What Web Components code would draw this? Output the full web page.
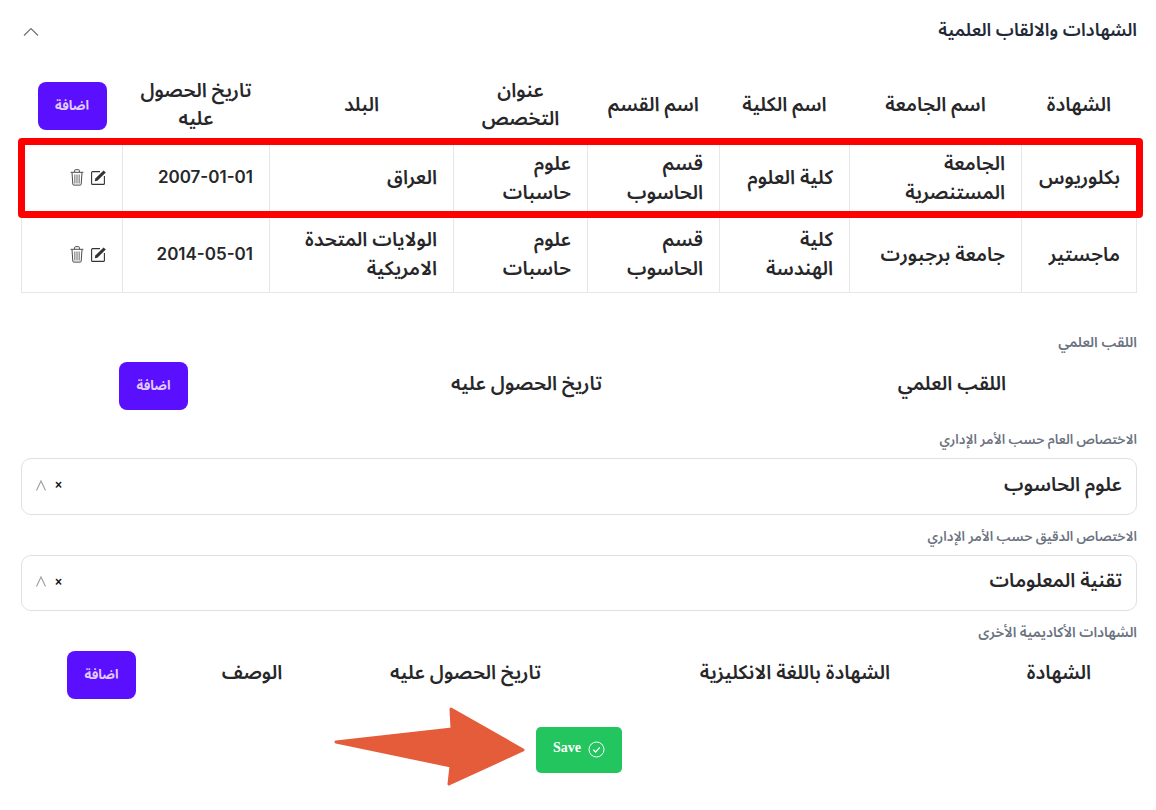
<!DOCTYPE html>
<html lang="ar" dir="rtl"><head><meta charset="utf-8"><title>Certificates</title>
<style>
html,body{margin:0;background:#fff}
body{font-family:Inter,"Noto Sans Arabic","Noto Sans",sans-serif;color:#27272a;width:1156px;height:810px;overflow:hidden;position:relative}
app-page{display:block}
</style></head><body>
<app-page></app-page>
<script>
const FONT='Inter,"Noto Sans Arabic","Noto Sans",sans-serif';
class AddBtn extends HTMLElement{constructor(){super();this.attachShadow({mode:'open'}).innerHTML=`<style>
:host{display:inline-flex;width:69px;height:48px;border-radius:8px;background:#5a0fff;color:#e0ccff;align-items:center;justify-content:center;font:700 13px ${FONT}}
</style><slot></slot>`}}
customElements.define('add-btn',AddBtn);
class FieldLabel extends HTMLElement{constructor(){super();this.attachShadow({mode:'open'}).innerHTML=`<style>
:host{display:block;font:600 13.300px/20px ${FONT};color:#6b7280;text-align:right}
</style><slot></slot>`}}
customElements.define('field-label',FieldLabel);
class SelectBox extends HTMLElement{constructor(){super();this.attachShadow({mode:'open'}).innerHTML=`<style>
:host{display:flex;box-sizing:border-box;height:var(--h,57px);border:1px solid #e0e0e4;border-radius:10px;align-items:center;justify-content:space-between;padding:0 14px 0 13px;font:600 19.500px ${FONT};color:#27272a}
.v{padding-bottom:4px}
.ctl{display:flex;align-items:center;gap:8px;direction:ltr;padding-bottom:2px}
.x{font:700 12px "Liberation Sans",sans-serif;color:#111}
</style><span class="v"><slot></slot></span><span class="ctl"><svg width="12" height="11" viewBox="0 0 12 11" fill="none" stroke="#a3a3a3" stroke-width="1.2"><path d="M1.500 10.500 6 1l4.500 9.500"/></svg><span class="x">×</span></span>`}}
customElements.define('select-box',SelectBox);
class HeadGrid extends HTMLElement{constructor(){super();this.attachShadow({mode:'open'}).innerHTML=`<style>
:host{display:grid;grid-template-columns:var(--cols);height:48px;align-items:center;justify-items:center;font:600 19.500px ${FONT};color:#27272a;text-align:center}
::slotted(span){padding-bottom:4px}
</style><slot></slot>`}}
customElements.define('head-grid',HeadGrid);
class SaveBtn extends HTMLElement{constructor(){super();this.attachShadow({mode:'open'}).innerHTML=`<style>
:host{display:flex;width:86px;height:46px;border-radius:5px;background:#22c55e;color:#fff;align-items:center;justify-content:center;gap:7px;direction:ltr;font:700 14px "Liberation Serif",serif}
span{margin-top:-3px}
</style><span>Save</span><svg width="17" height="17" viewBox="0 0 17 17" fill="none" stroke="#fff" stroke-width="1"><circle cx="8.5" cy="8.5" r="7.5"/><path d="M5.3 8.7 7.6 11l4.2-4.6" stroke-width="1.3"/></svg>`}}
customElements.define('save-btn',SaveBtn);
class RowActions extends HTMLElement{constructor(){super();this.attachShadow({mode:'open'}).innerHTML=`<style>
:host{display:flex;gap:7px;align-items:center;direction:rtl}
svg{display:block}
</style><svg width="15" height="15" viewBox="0 0 15 15" fill="none" stroke="#333" stroke-width="1.100"><path d="M9 1.600H1.600a1 1 0 0 0-1 1V13.400a1 1 0 0 0 1 1H12.400a1 1 0 0 0 1-1V6"/><path d="M3.800 11.200l.5-2.600L12.600.4l2.200 2.200L6.400 10.700z" fill="#333" stroke="none"/></svg><svg width="14" height="17" viewBox="0 0 14 17" fill="none" stroke="#4b4b4b" stroke-width="1"><path d="M.6 3.300h12.800M4.600 3V1.500a.8.8 0 0 1 .8-.8h3.200a.8.8 0 0 1 .8.800V3"/><path d="M2 3.500l.8 11.600a1 1 0 0 0 1 1h6.400a1 1 0 0 0 1-1L12 3.500"/><path d="M4.800 5.500v9M7 5.500v9M9.200 5.500v9" stroke="#8a8a8a" stroke-width="1.300"/></svg>`}}
customElements.define('row-actions',RowActions);
class DegreeTable extends HTMLElement{constructor(){super();
const rows=[["بكلوريوس","الجامعة المستنصرية","كلية العلوم","قسم الحاسوب","علوم حاسبات","العراق","2007-01-01"],["ماجستير","جامعة برجبورت","كلية الهندسة","قسم الحاسوب","علوم حاسبات","الولايات المتحدة الامريكية","2014-05-01"]];
const heads=["الشهادة","اسم الجامعة","اسم الكلية","اسم القسم","عنوان التخصص","البلد","تاريخ الحصول عليه"];
const w=[115,172,130,132,134,184,147,101];
this.attachShadow({mode:'open'}).innerHTML=`<style>
:host{display:block;margin-left:1px}
table{width:1115px;table-layout:fixed;border-collapse:collapse;font-family:${FONT};color:#27272a}
th{font:600 19.500px/28px ${FONT};padding:0 16px 4px;height:66px;box-sizing:border-box;text-align:center}
th.b{padding:0;vertical-align:middle}
td{border:1px solid #e5e7eb;font:600 19.500px/29px ${FONT};text-align:right;padding:0 16px;height:76px;box-sizing:border-box}
td.d{font-size:17px}
tr.first td{height:77px}
td.a{padding:0 16px 0 0}
.wrap{display:flex;justify-content:flex-start;padding-right:16px}
</style><table><colgroup>${w.map(x=>`<col style="width:${x}px">`).join('')}</colgroup>
<thead><tr>${heads.map(h=>`<th>${h}</th>`).join('')}<th class="b"><div class="wrap"><add-btn>اضافة</add-btn></div></th></tr></thead>
<tbody>${rows.map((r,i)=>`<tr class="${i?'':'first'}">${r.map((c,j)=>`<td class="${j==6?'d':''}">${c}</td>`).join('')}<td class="a"><row-actions></row-actions></td></tr>`).join('')}</tbody></table>`}}
customElements.define('degree-table',DegreeTable);
class AppPage extends HTMLElement{constructor(){super();this.attachShadow({mode:'open'}).innerHTML=`<style>
:host{display:block;position:relative;height:810px;font-family:${FONT}}
.main{box-sizing:border-box;width:1156px;padding:0 19px 0 21px;display:flex;flex-direction:column}
.top{height:73px;display:flex;justify-content:space-between;align-items:flex-start;padding-top:19px;box-sizing:border-box}
.title{font:600 18px/22px ${FONT};color:#1f2937}
.top svg{margin:8px 0 0 2px;display:block}
.l1{margin-top:39px;font-size:14.200px}
.g1{margin-top:10px;--cols:370px 481px 265px}
.l2{margin-top:19px}.s1{margin-top:9px}
.l3{margin-top:11px}.s2{margin-top:9px;--h:56px}
.l4{margin-top:11px;font-size:14px}
.g2{margin-top:9px;--cols:156px 372px 287px 140px 161px}
.save{display:flex;justify-content:center;margin-top:28px}
.mark{position:absolute;left:18px;top:138px;width:1125px;height:80px;box-sizing:border-box;border:7px solid #fe0000;border-radius:4px;pointer-events:none}
.arrow{position:absolute;left:330px;top:700px;pointer-events:none}
</style>
<div class="main">
<div class="top"><span class="title">الشهادات والالقاب العلمية</span><svg width="16" height="10" viewBox="0 0 16 10" fill="none" stroke="#6b7280" stroke-width="1.200"><path d="M1 8.500 8 1.500l7 7"/></svg></div>
<degree-table></degree-table>
<field-label class="l1">اللقب العلمي</field-label>
<head-grid class="g1"><span>اللقب العلمي</span><span>تاريخ الحصول عليه</span><add-btn>اضافة</add-btn></head-grid>
<field-label class="l2">الاختصاص العام حسب الأمر الإداري</field-label>
<select-box class="s1">علوم الحاسوب</select-box>
<field-label class="l3">الاختصاص الدقيق حسب الأمر الإداري</field-label>
<select-box class="s2">تقنية المعلومات</select-box>
<field-label class="l4">الشهادات الأكاديمية الأخرى</field-label>
<head-grid class="g2"><span>الشهادة</span><span>الشهادة باللغة الانكليزية</span><span>تاريخ الحصول عليه</span><span>الوصف</span><add-btn>اضافة</add-btn></head-grid>
<div class="save"><save-btn></save-btn></div>
</div>
<div class="mark"></div>
<svg class="arrow" width="200" height="90" viewBox="330 700 200 90"><path d="M336 742 452 729 451 709 523 750 449 784 451 766Z" fill="#e45c3a" stroke="#e45c3a" stroke-width="3" stroke-linejoin="round"/></svg>
`}}
customElements.define('app-page',AppPage);
</script></body></html>
